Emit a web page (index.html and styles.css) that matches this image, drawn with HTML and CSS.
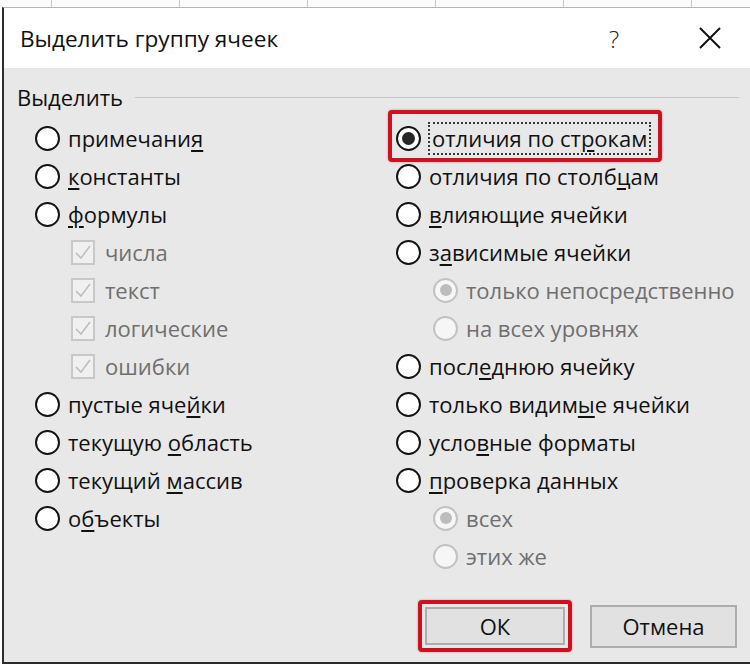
FILE: index.html
```html
<!DOCTYPE html>
<html lang="ru">
<head>
<meta charset="utf-8">
<title>Выделить группу ячеек</title>
<link rel="stylesheet" href="styles.css">
</head>
<body>
<div class="sheet"></div>
<div class="dialog">
  <div class="titlebar">
    <span class="title">Выделить группу ячеек</span>
    <span class="help">?</span>
    <span class="close"><svg width="22" height="22" viewBox="0 0 22 22"><path d="M1 1 L21 21 M21 1 L1 21" stroke="#111" stroke-width="2" fill="none"/></svg></span>
  </div>
  <div class="body">
    <div class="legend"><span class="legend-text">Выделить</span><span class="rule"></span></div>
    <div class="cols">
      <div class="col">
        <div class="row"><span class="radio"></span><span class="lbl">примечани<span class="ak">я</span></span></div>
        <div class="row"><span class="radio"></span><span class="lbl"><span class="ak">к</span>онстанты</span></div>
        <div class="row"><span class="radio"></span><span class="lbl"><span class="ak">ф</span>ормулы</span></div>
        <div class="row sub"><span class="cb"><svg width="20" height="21" viewBox="0 0 20 21"><path d="M3 11 L8 16 L17 4" stroke="#bdbdbd" stroke-width="1.5" fill="none"/></svg></span><span class="lbl dis">числа</span></div>
        <div class="row sub"><span class="cb"><svg width="20" height="21" viewBox="0 0 20 21"><path d="M3 11 L8 16 L17 4" stroke="#bdbdbd" stroke-width="1.5" fill="none"/></svg></span><span class="lbl dis">текст</span></div>
        <div class="row sub"><span class="cb"><svg width="20" height="21" viewBox="0 0 20 21"><path d="M3 11 L8 16 L17 4" stroke="#bdbdbd" stroke-width="1.5" fill="none"/></svg></span><span class="lbl dis">логические</span></div>
        <div class="row sub"><span class="cb"><svg width="20" height="21" viewBox="0 0 20 21"><path d="M3 11 L8 16 L17 4" stroke="#bdbdbd" stroke-width="1.5" fill="none"/></svg></span><span class="lbl dis">ошибки</span></div>
        <div class="row"><span class="radio"></span><span class="lbl">пустые яче<span class="ak">й</span>ки</span></div>
        <div class="row"><span class="radio"></span><span class="lbl">текущую <span class="ak">о</span>бласть</span></div>
        <div class="row"><span class="radio"></span><span class="lbl">текущий <span class="ak">м</span>ассив</span></div>
        <div class="row"><span class="radio"></span><span class="lbl">о<span class="ak">б</span>ъекты</span></div>
      </div>
      <div class="col">
        <div class="row marked"><span class="radio checked"></span><span class="lbl focus">отличия по ст<span class="ak">р</span>окам</span><span class="mark"></span></div>
        <div class="row"><span class="radio"></span><span class="lbl">отличия по столб<span class="ak">ц</span>ам</span></div>
        <div class="row"><span class="radio"></span><span class="lbl"><span class="ak">в</span>лияющие ячейки</span></div>
        <div class="row"><span class="radio"></span><span class="lbl">з<span class="ak">а</span>висимые ячейки</span></div>
        <div class="row sub2"><span class="radio dis checked"></span><span class="lbl dis">только непосредственно</span></div>
        <div class="row sub2"><span class="radio dis"></span><span class="lbl dis">на всех уровнях</span></div>
        <div class="row"><span class="radio"></span><span class="lbl">посл<span class="ak">е</span>днюю ячейку</span></div>
        <div class="row"><span class="radio"></span><span class="lbl">только видим<span class="ak">ы</span>е ячейки</span></div>
        <div class="row"><span class="radio"></span><span class="lbl">усло<span class="ak">в</span>ные форматы</span></div>
        <div class="row"><span class="radio"></span><span class="lbl"><span class="ak">п</span>роверка данных</span></div>
        <div class="row sub2"><span class="radio dis checked"></span><span class="lbl dis">всех</span></div>
        <div class="row sub2"><span class="radio dis"></span><span class="lbl dis">этих же</span></div>
      </div>
    </div>
    <div class="footer">
      <span class="okwrap"><button class="btn ok">ОК</button></span>
      <button class="btn cancel">Отмена</button>
    </div>
  </div>
</div>
</body>
</html>
```

FILE: styles.css
```css
html, body {
  margin: 0;
  padding: 0;
  background: #ffffff;
  overflow: hidden;
}
body {
  width: 750px;
  height: 666px;
  font-family: "Open Sans", "Noto Sans", sans-serif;
  color: #111;
}
.sheet {
  height: 7px;
  background: repeating-linear-gradient(90deg, #fbfbfb 0 51px, #c9c9c9 51px 52px, #fbfbfb 52px 128px);
}
.dialog {
  box-sizing: border-box;
  width: 748px;
  margin-left: 2px;
  border-left: 2px solid #2d2d2d;
  border-top: 1px solid #b5b5b5;
  border-bottom: 2px solid #2a2a2a;
}
.titlebar {
  height: 60px;
  background: #ffffff;
  display: flex;
  align-items: center;
  padding-left: 16px;
}
.title {
  font-size: 22.6px;
  color: #111;
}
.help {
  margin-left: auto;
  width: 40px;
  text-align: center;
  font-size: 24px;
  font-weight: 300;
  color: #222;
}
.close {
  width: 50px;
  margin-left: 51px;
  margin-right: 15px;
  display: flex;
  justify-content: center;
}
.body {
  background: #e8e8e8;
  padding: 10px 0 10px 0;
}
.legend {
  height: 38px;
  display: flex;
  align-items: center;
  padding-left: 13px;
  padding-right: 11px;
}
.legend-text {
  font-size: 22px;
}
.rule {
  flex: 1;
  height: 1px;
  background: #c6c6c6;
  margin-left: 12px;
}
.cols {
  margin-top: 3px;
  padding-left: 31px;
  display: grid;
  grid-template-columns: 361px 1fr;
}
.row {
  height: 38px;
  display: flex;
  align-items: center;
  gap: 8px;
  font-size: 22px;
  position: relative;
}
.row.sub {
  padding-left: 36px;
  gap: 10px;
}
.row.sub2 {
  padding-left: 37px;
}
.radio {
  box-sizing: border-box;
  width: 25px;
  height: 25px;
  border: 2px solid #141414;
  border-radius: 50%;
  background: #ffffff;
  flex: none;
  display: flex;
  align-items: center;
  justify-content: center;
}
.radio.checked::after {
  content: "";
  width: 13px;
  height: 13px;
  border-radius: 50%;
  background: #262626;
}
.radio.dis {
  border-color: #c2c2c2;
  background: #f6f6f6;
}
.radio.dis.checked::after {
  background: #bdbdbd;
  width: 12px;
  height: 12px;
}
.cb {
  box-sizing: border-box;
  width: 24px;
  height: 25px;
  border: 2px solid #c8c8c8;
  background: #f0f0f0;
  flex: none;
  display: flex;
  align-items: center;
  justify-content: center;
}
.lbl {
  white-space: nowrap;
  color: #111;
}
.lbl.dis {
  color: #6f6f6f;
}
.ak {
  text-decoration: underline;
  text-decoration-thickness: 2px;
  text-underline-offset: 3px;
}
.lbl.focus {
  border: 2px dotted #3a3a3a;
  padding: 0 2px;
  margin-left: -1px;
  line-height: 29px;
}
.mark {
  position: absolute;
  left: -8px;
  top: -9px;
  width: 274px;
  height: 52px;
  box-sizing: border-box;
  border: 4px solid #cc1121;
  border-radius: 4px;
  box-shadow: 0 0 2px rgba(200, 20, 30, 0.5);
  pointer-events: none;
}
.footer {
  margin-top: 25px;
  padding-left: 414px;
  display: flex;
  align-items: center;
  gap: 18px;
  height: 52px;
}
.okwrap {
  box-sizing: border-box;
  width: 154px;
  height: 52px;
  border: 4px solid #cc1121;
  border-radius: 4px;
  padding: 3px;
  display: flex;
  box-shadow: 0 0 2px rgba(200, 20, 30, 0.5);
}
.btn {
  box-sizing: border-box;
  background: #e1e1e1;
  border: 2px solid #adadad;
  font-family: "Open Sans", "Noto Sans", sans-serif;
  font-size: 22px;
  color: #111;
  padding: 0;
  margin: 0;
}
.btn.ok {
  width: 100%;
  height: 100%;
}
.btn.cancel {
  width: 147px;
  height: 43px;
}
```
